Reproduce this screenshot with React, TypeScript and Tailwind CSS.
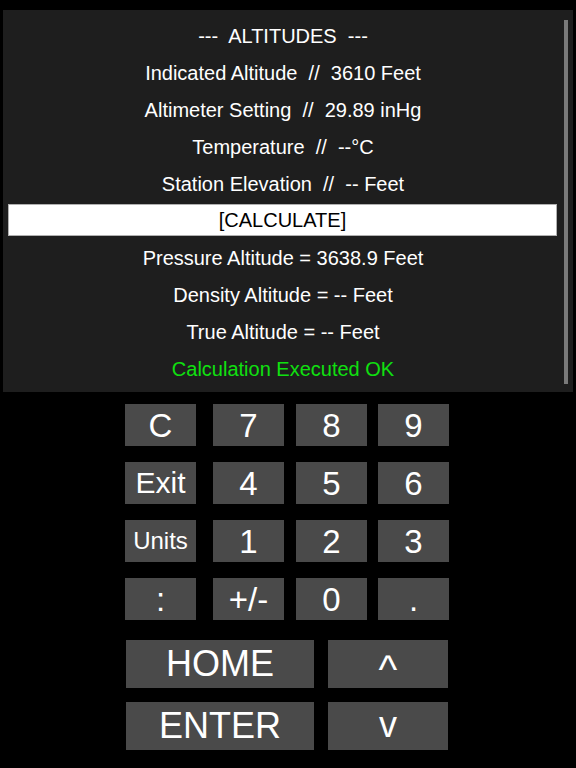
import React from "react";

const font = { fontFamily: '"Liberation Sans", Arial, sans-serif' };

function Row({ children, className = "" }: { children: React.ReactNode; className?: string }) {
  return (
    <div className={`h-[37px] pr-[10px] flex items-center justify-center text-[20px] whitespace-pre ${className}`}>
      {children}
    </div>
  );
}

function Key({ label, className = "" }: { label: string; className?: string }) {
  return (
    <div className={`bg-[#4a4a4a] text-white flex items-center justify-center leading-none shrink-0 ${className}`}>
      {label}
    </div>
  );
}

function KeyRow({ labels, first }: { labels: string[]; first: string }) {
  return (
    <div className="flex h-[42px]">
      <Key label={labels[0]} className={`w-[71px] ${first}`} />
      <Key label={labels[1]} className="w-[71px] ml-[17px] text-[33px]" />
      <Key label={labels[2]} className="w-[71px] ml-[12px] text-[33px]" />
      <Key label={labels[3]} className="w-[71px] ml-[11px] text-[33px]" />
    </div>
  );
}

export default function App() {
  return (
    <div className="w-[576px] h-[768px] bg-black pt-[10px] overflow-hidden" style={font}>
      <div className="relative mx-[3px] h-[382px] bg-[#1e1e1e] pt-[7px] text-white">
        <Row>{"---  ALTITUDES  ---"}</Row>
        <Row>{"Indicated Altitude  //  3610 Feet"}</Row>
        <Row>{"Altimeter Setting  //  29.89 inHg"}</Row>
        <Row>{"Temperature  //  --°C"}</Row>
        <Row>{"Station Elevation  //  -- Feet"}</Row>
        <div className="h-[37px] pt-[2px] pl-[5px] pr-[16px]">
          <div className="h-[32px] bg-white border border-[#b0b0b0] text-black text-[20px] flex items-center justify-center">
            [CALCULATE]
          </div>
        </div>
        <Row>{"Pressure Altitude = 3638.9 Feet"}</Row>
        <Row>{"Density Altitude = -- Feet"}</Row>
        <Row>{"True Altitude = -- Feet"}</Row>
        <Row className="text-[#10e010]">{"Calculation Executed OK"}</Row>
        <div className="absolute right-[5px] top-[10px] w-[4px] h-[364px] bg-[#7a7a7a]" />
      </div>

      <div className="ml-[125px] mt-[12px] flex flex-col gap-[16px]">
        <KeyRow labels={["C", "7", "8", "9"]} first="text-[33px]" />
        <KeyRow labels={["Exit", "4", "5", "6"]} first="text-[30px]" />
        <KeyRow labels={["Units", "1", "2", "3"]} first="text-[24px]" />
        <KeyRow labels={[":", "+/-", "0", "."]} first="text-[33px]" />
      </div>

      <div className="ml-[126px] mt-[20px] flex flex-col gap-[14px]">
        <div className="flex gap-[14px]">
          <Key label="HOME" className="w-[188px] h-[48px] text-[36px]" />
          <Key label="^" className="w-[120px] h-[48px] text-[40px] pt-[10px]" />
        </div>
        <div className="flex gap-[14px]">
          <Key label="ENTER" className="w-[188px] h-[48px] text-[36px]" />
          <Key label="v" className="w-[120px] h-[48px] text-[36px] pb-[2px]" />
        </div>
      </div>
    </div>
  );
}
